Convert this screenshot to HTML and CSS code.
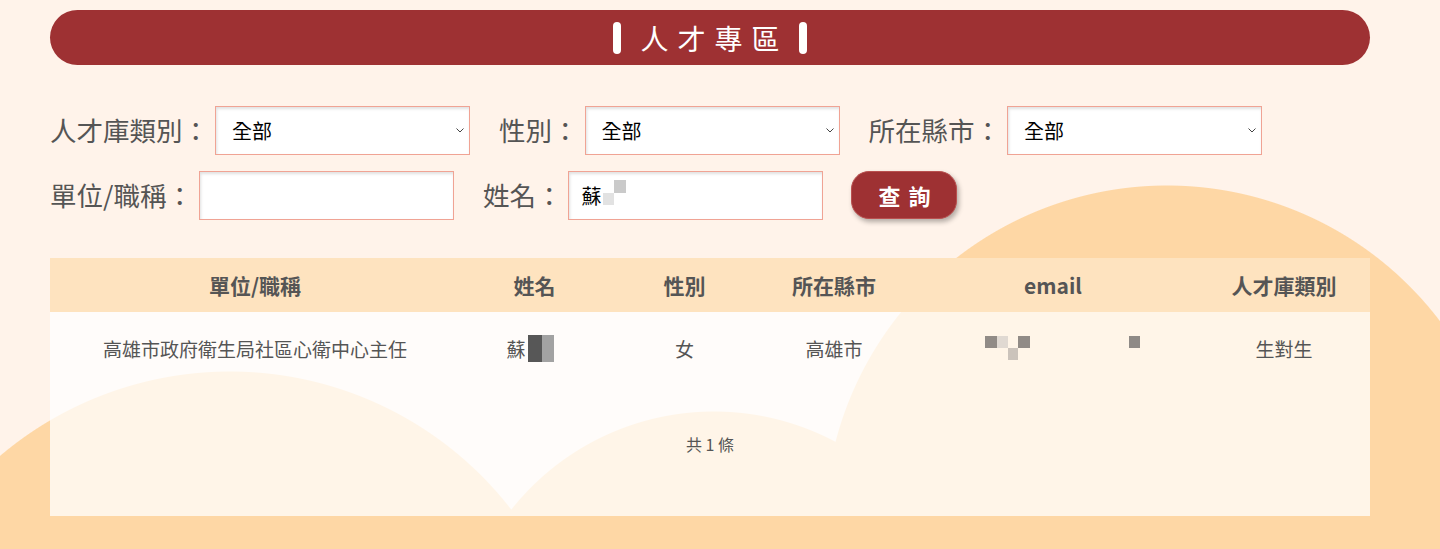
FILE: index.html
```html
<!DOCTYPE html>
<html lang="zh-Hant">
<head>
<meta charset="utf-8">
<title>人才專區</title>
<link rel="stylesheet" href="styles.css">
</head>
<body>
<div class="page">
  <div class="title-bar">
    <span class="title-mark"></span>
    <h1 class="title-text">人才專區</h1>
    <span class="title-mark"></span>
  </div>

  <form class="search">
    <div class="search-row">
      <div class="field-group">
        <label class="field-label">人才庫類別：</label>
        <div class="select-wrap">
          <select class="field-control"><option>全部</option></select>
          <svg class="chevron" viewBox="0 0 8 5" width="8" height="5"><path d="M0.5 0.5 L4 4 L7.5 0.5" fill="none" stroke="#444" stroke-width="1"/></svg>
        </div>
      </div>
      <div class="field-group">
        <label class="field-label">性別：</label>
        <div class="select-wrap">
          <select class="field-control"><option>全部</option></select>
          <svg class="chevron" viewBox="0 0 8 5" width="8" height="5"><path d="M0.5 0.5 L4 4 L7.5 0.5" fill="none" stroke="#444" stroke-width="1"/></svg>
        </div>
      </div>
      <div class="field-group">
        <label class="field-label">所在縣市：</label>
        <div class="select-wrap">
          <select class="field-control"><option>全部</option></select>
          <svg class="chevron" viewBox="0 0 8 5" width="8" height="5"><path d="M0.5 0.5 L4 4 L7.5 0.5" fill="none" stroke="#444" stroke-width="1"/></svg>
        </div>
      </div>
    </div>
    <div class="search-row">
      <div class="field-group">
        <label class="field-label">單位/職稱：</label>
        <input class="field-control" type="text">
      </div>
      <div class="field-group">
        <label class="field-label">姓名：</label>
        <div class="name-field">
          <input class="field-control field-input" type="text" value="蘇">
          <span class="mosaic mosaic-input">
            <i class="px px-a"></i><i class="px px-b"></i>
          </span>
        </div>
      </div>
      <button type="button" class="search-btn">查詢</button>
    </div>
  </form>

  <div class="result">
    <div class="result-head">
      <div class="cell">單位/職稱</div>
      <div class="cell">姓名</div>
      <div class="cell">性別</div>
      <div class="cell">所在縣市</div>
      <div class="cell">email</div>
      <div class="cell">人才庫類別</div>
    </div>
    <div class="result-row">
      <div class="cell">高雄市政府衛生局社區心衛中心主任</div>
      <div class="cell">蘇<span class="name-mosaic"><i class="nm nm-dark"></i><i class="nm nm-light"></i></span></div>
      <div class="cell">女</div>
      <div class="cell">高雄市</div>
      <div class="cell">
        <span class="email-mosaic">
          <i class="em em-1"></i><i class="em em-2"></i><i class="em em-3"></i><i class="em em-4"></i><i class="em em-5"></i>
        </span>
      </div>
      <div class="cell">生對生</div>
    </div>
    <div class="result-foot">共 1 條</div>
  </div>
</div>
</body>
</html>
```

FILE: styles.css
```css
* {
  box-sizing: border-box;
}

html, body {
  margin: 0;
  padding: 0;
}

body {
  font-family: "Noto Sans CJK TC", "Noto Sans", sans-serif;
  color: #555;
  overflow: hidden;
}

.page {
  min-height: 549px;
  height: 100vh;
  padding: 10px 70px 0 50px;
  background-color: #fff3ea;
  background-image:
    radial-gradient(circle at 1167px 528px, #fed7a5 342px, rgba(254, 215, 165, 0) 343px),
    radial-gradient(circle at 230px 727px, #fed7a5 355px, rgba(254, 215, 165, 0) 356px),
    radial-gradient(circle at 714px 670px, #fed7a5 258px, rgba(254, 215, 165, 0) 259px);
  background-repeat: no-repeat;
}

/* ---------- title ---------- */
.title-bar {
  height: 55px;
  border-radius: 28px;
  background: #9e3133;
  display: flex;
  align-items: center;
  justify-content: center;
  gap: 19px;
}

.title-mark {
  width: 8px;
  height: 32px;
  border-radius: 4px;
  background: #fff;
}

.title-text {
  margin: 0;
  font-size: 28px;
  font-weight: 400;
  letter-spacing: 9px;
  margin-right: -9px;
  color: #fff;
  line-height: 1;
}

/* ---------- search form ---------- */
.search {
  margin-top: 41px;
  display: flex;
  flex-direction: column;
  gap: 16px;
}

.search-row {
  display: flex;
  align-items: center;
  gap: 29px;
  height: 49px;
}

.field-group {
  display: flex;
  align-items: center;
  gap: 6px;
}

.field-label {
  font-size: 26.5px;
  color: #555;
  line-height: 1;
  white-space: nowrap;
}

.field-control {
  width: 255px;
  height: 49px;
  border: 1px solid #f0a394;
  background-color: #fff;
  box-shadow: inset 1px 2px 3px rgba(0, 0, 0, 0.12);
  font-family: "Noto Sans CJK TC", "Noto Sans", sans-serif;
  font-size: 20px;
  color: #000;
  padding: 0 8px 0 12px;
  border-radius: 0;
  outline: none;
}

.select-wrap {
  position: relative;
}

select.field-control {
  display: block;
  -webkit-appearance: none;
  appearance: none;
  padding-left: 16px;
}

.chevron {
  position: absolute;
  right: 6px;
  top: 22px;
  pointer-events: none;
}

.name-field {
  position: relative;
}

.mosaic-input {
  position: absolute;
  left: 35px;
  top: 9px;
  width: 24px;
  height: 25px;
}

.px {
  position: absolute;
  width: 12px;
  height: 12px;
}

.px-a {
  left: 0;
  top: 13px;
  background: #e2e2e2;
  width: 11px;
}

.px-b {
  left: 11px;
  top: 0;
  background: #cacaca;
  height: 13px;
}

.search-btn {
  width: 106px;
  height: 48px;
  margin-top: -2px;
  margin-left: -1px;
  border: 1px solid #b9504f;
  border-radius: 18px;
  background: #9e3133;
  color: #fff;
  font-family: "Noto Sans CJK TC", "Noto Sans", sans-serif;
  font-size: 22px;
  font-weight: 700;
  letter-spacing: 8px;
  padding: 0 0 0 8px;
  box-shadow: 2px 3px 5px rgba(0, 0, 0, 0.3);
  cursor: pointer;
}

/* ---------- result table ---------- */
.result {
  margin-top: 38px;
  width: 1320px;
  background: rgba(255, 255, 255, 0.75);
}

.result-head,
.result-row {
  display: grid;
  grid-template-columns: 410px 149px 151px 148px 290px 172px;
  align-items: center;
}

.result-head {
  height: 54px;
  background: #fee3bf;
  font-size: 21px;
  font-weight: 700;
  color: #555;
}

.result-row {
  height: 73px;
  font-size: 19px;
  color: #555;
}

.cell {
  display: flex;
  justify-content: center;
  align-items: center;
  line-height: 1;
}

.name-mosaic {
  display: inline-flex;
  margin-left: 2px;
  margin-right: 9px;
}

.nm {
  width: 13px;
  height: 27px;
}

.nm-dark {
  background: #575757;
  width: 14px;
}

.nm-light {
  background: #a2a2a2;
  width: 12px;
}

.email-mosaic {
  position: relative;
  width: 155px;
  height: 24px;
  margin-left: 18px;
  margin-top: -2px;
}

.em {
  position: absolute;
  width: 11px;
  height: 12px;
}

.em-1 { left: 0;   top: 0;  background: #918b86; width: 12px; }
.em-2 { left: 12px; top: 0;  background: #e0d9d2; }
.em-3 { left: 23px; top: 12px; background: #cbc3bb; width: 10px; }
.em-4 { left: 33px; top: 0;  background: #918b86; width: 12px; }
.em-5 { left: 144px; top: 0;  background: #8f8a86; }

.result-foot {
  height: 131px;
  padding-top: 48px;
  text-align: center;
  font-size: 16px;
  color: #555;
  line-height: 22px;
}
```
